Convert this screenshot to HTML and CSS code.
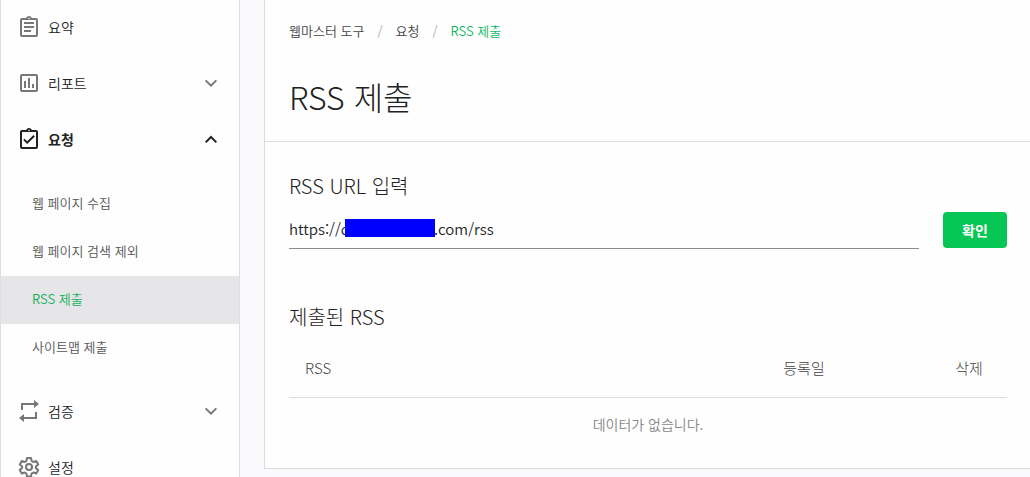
FILE: index.html
```html
<!DOCTYPE html>
<html lang="ko">
<head>
    <meta charset="UTF-8">
    <meta name="viewport" content="width=device-width, initial-scale=1.0">
    <title>RSS 제출</title>
    <link rel="stylesheet" href="styles.css">
</head>
<body>
    <div class="layout">
        <nav class="sidebar">
            <a class="menu-item" href="#">
                <svg class="icon" viewBox="0 0 24 24"><path d="M7 15h7v2H7zm0-4h10v2H7zm0-4h10v2H7zm12-4h-4.180C14.400 1.840 13.300 1 12 1s-2.400.840-2.820 2H5c-1.100 0-2 .900-2 2v15c0 1.100.900 2 2 2h14c1.100 0 2-.900 2-2V5c0-1.100-.900-2-2-2zm-7-.250c.410 0 .750.340.750.750s-.340.750-.750.750-.750-.340-.750-.750.340-.750.750-.750zM19 20H5V5h14z"/></svg>
                <span>요약</span>
            </a>
            <a class="menu-item" href="#">
                <svg class="icon" viewBox="0 0 24 24"><path d="M19 3H5c-1.100 0-2 .900-2 2v14c0 1.100.900 2 2 2h14c1.100 0 2-.900 2-2V5c0-1.100-.900-2-2-2zm0 16H5V5h14zM7 10h2v7H7zm4-3h2v10h-2zm4 6h2v4h-2z"/></svg>
                <span>리포트</span>
                <svg class="arrow" viewBox="0 0 24 24"><path d="M4 8l8 8 8-8"/></svg>
            </a>
            <a class="menu-item open" href="#">
                <svg class="icon" viewBox="0 0 24 24"><path d="M19 3h-4.180C14.400 1.840 13.300 1 12 1s-2.400.840-2.820 2H5c-1.100 0-2 .900-2 2v15c0 1.100.900 2 2 2h14c1.100 0 2-.900 2-2V5c0-1.100-.900-2-2-2zm-7-.250c.410 0 .750.340.750.750s-.340.750-.750.750-.750-.340-.750-.750.340-.750.750-.750zM19 20H5V5h14zM17.900 9.400L16.500 8l-6.300 6.300-2.600-2.600-1.400 1.400 4 4z"/></svg>
                <span>요청</span>
                <svg class="arrow" viewBox="0 0 24 24"><path d="M4 17l8-8 8 8"/></svg>
            </a>
            <div class="submenu">
                <a href="#">웹 페이지 수집</a>
                <a href="#">웹 페이지 검색 제외</a>
                <a class="active" href="#">RSS 제출</a>
                <a href="#">사이트맵 제출</a>
            </div>
            <a class="menu-item" href="#">
                <svg class="icon" viewBox="0 0 24 24"><path d="M4 11V4h13V1l5 4-5 4V6H6v5zM20 13v7H7v3l-5-4 5-4v3h11v-5z"/></svg>
                <span>검증</span>
                <svg class="arrow" viewBox="0 0 24 24"><path d="M4 8l8 8 8-8"/></svg>
            </a>
            <a class="menu-item" href="#">
                <svg class="icon gear" viewBox="0 0 24 24"><path d="M10 3h4l.6 3 1.700 1 2.900-1 2 3.500-2.300 2v1.500l2.300 2-2 3.500-2.900-1-1.700 1-.6 3h-4l-.6-3-1.700-1-2.900 1-2-3.500 2.300-2v-1.500l-2.300-2 2-3.500 2.900 1 1.700-1z"/><circle cx="12" cy="12" r="3"/></svg>
                <span>설정</span>
            </a>
        </nav>

        <main class="content">
            <header class="page-header">
                <nav class="breadcrumb">
                    <a href="#">웹마스터 도구</a>
                    <span class="slash">/</span>
                    <a href="#">요청</a>
                    <span class="slash">/</span>
                    <a class="current" href="#">RSS 제출</a>
                </nav>
                <h1>RSS 제출</h1>
            </header>

            <section class="page-body">
                <h2><label for="rss-url">RSS URL 입력</label></h2>
                <form class="rss-form">
                    <div class="url-field">
                        <input type="text" id="rss-url" value="https://d&nbsp;&nbsp;&nbsp;&nbsp;&nbsp;&nbsp;&nbsp;&nbsp;&nbsp;&nbsp;&nbsp;&nbsp;&nbsp;&nbsp;&nbsp;&nbsp;&nbsp;&nbsp;&nbsp;&nbsp;.com/rss">
                        <span class="mask"></span>
                    </div>
                    <button type="button" class="btn-ok">확인</button>
                </form>

                <h2>제출된 RSS</h2>
                <table class="rss-table">
                    <thead>
                        <tr>
                            <th class="col-rss">RSS</th>
                            <th class="col-date">등록일</th>
                            <th class="col-delete">삭제</th>
                        </tr>
                    </thead>
                    <tbody>
                        <tr>
                            <td colspan="3">데이터가 없습니다.</td>
                        </tr>
                    </tbody>
                </table>
            </section>
        </main>
    </div>
</body>
</html>
```
FILE: styles.css
```css
* {
    box-sizing: border-box;
}
body {
    margin: 0;
    font-family: "Noto Sans CJK KR", sans-serif;
    font-size: 14px;
    font-weight: 350;
    color: #222;
    background-color: #faf9fc;
}
a {
    color: inherit;
    text-decoration: none;
}
.layout {
    display: flex;
    gap: 24px;
    height: 100vh;
    overflow: hidden;
    align-items: flex-start;
}

/* sidebar */
.sidebar {
    flex: 0 0 240px;
    background-color: #fefefe;
    border-left: 1px solid #dedee0;
    border-right: 1px solid #dedee0;
}
.menu-item {
    display: flex;
    align-items: center;
    gap: 7px;
    height: 56px;
    padding: 0 20px 2px 16px;
    line-height: 20px;
}
.icon {
    width: 24px;
    height: 24px;
    fill: #757779;
}
.gear {
    fill: none;
    stroke: #757779;
    stroke-width: 2;
    stroke-linejoin: round;
}
.arrow {
    width: 16px;
    height: 16px;
    margin-left: auto;
    fill: none;
    stroke: #757779;
    stroke-width: 3;
}
.open {
    font-weight: bold;
}
.open .icon {
    fill: #222;
}
.open .arrow {
    stroke: #222;
}
.submenu {
    padding: 12px 0;
}
.submenu a {
    display: block;
    height: 48px;
    padding-left: 31px;
    font-size: 13px;
    line-height: 46px;
    color: #555;
}
.submenu .active {
    color: #12b05c;
    background-color: #e6e5e7;
}

/* content */
.content {
    flex: 1;
    background-color: #fefefe;
    border-left: 1px solid #dcdbe0;
    border-bottom: 1px solid #dcdbe0;
}
.page-header {
    padding: 19px 24px 21px;
    border-bottom: 1px solid #dcdde0;
}
.breadcrumb {
    display: flex;
    gap: 13px;
    font-size: 13px;
    line-height: 24px;
    color: #444;
}
.slash {
    color: #aaa;
}
.breadcrumb .current {
    color: #12b860;
}
h1 {
    margin: 29px 0 0;
    font-size: 32px;
    font-weight: 300;
    line-height: 48px;
}
.page-body {
    padding: 30px 23px 18px 24px;
}
h2 {
    margin: 0;
    font-size: 20px;
    font-weight: 300;
    line-height: 28px;
}
.rss-form {
    display: flex;
    gap: 24px;
    margin: 12px 0 54px;
}
.url-field {
    flex: 1;
    position: relative;
}
.url-field input {
    display: block;
    width: 100%;
    height: 37px;
    padding: 0 0 3px;
    border: none;
    border-bottom: 1px solid #8c8c8c;
    background: none;
    font-family: inherit;
    font-size: 15px;
    font-weight: 350;
    color: #222;
    outline: none;
}
.mask {
    position: absolute;
    left: 56px;
    top: 7px;
    width: 90px;
    height: 18px;
    background-color: #0000fe;
}
.btn-ok {
    width: 64px;
    height: 36px;
    padding: 0;
    border: none;
    border-radius: 4px;
    background-color: #06c755;
    color: #fff;
    font-family: inherit;
    font-size: 14px;
    font-weight: bold;
    cursor: pointer;
}
.rss-table {
    width: 100%;
    margin-top: 8px;
    border-collapse: collapse;
    table-layout: fixed;
    line-height: 20px;
}
.rss-table th {
    padding: 19px 16px;
    border-bottom: 1px solid #dcdce0;
    font-weight: 300;
    font-size: 15px;
    color: #444;
}
.rss-table .col-rss {
    text-align: left;
}
.col-date {
    width: 254px;
}
.col-delete {
    width: 76px;
}
.rss-table td {
    padding: 16px;
    text-align: center;
    color: #888;
}
```
